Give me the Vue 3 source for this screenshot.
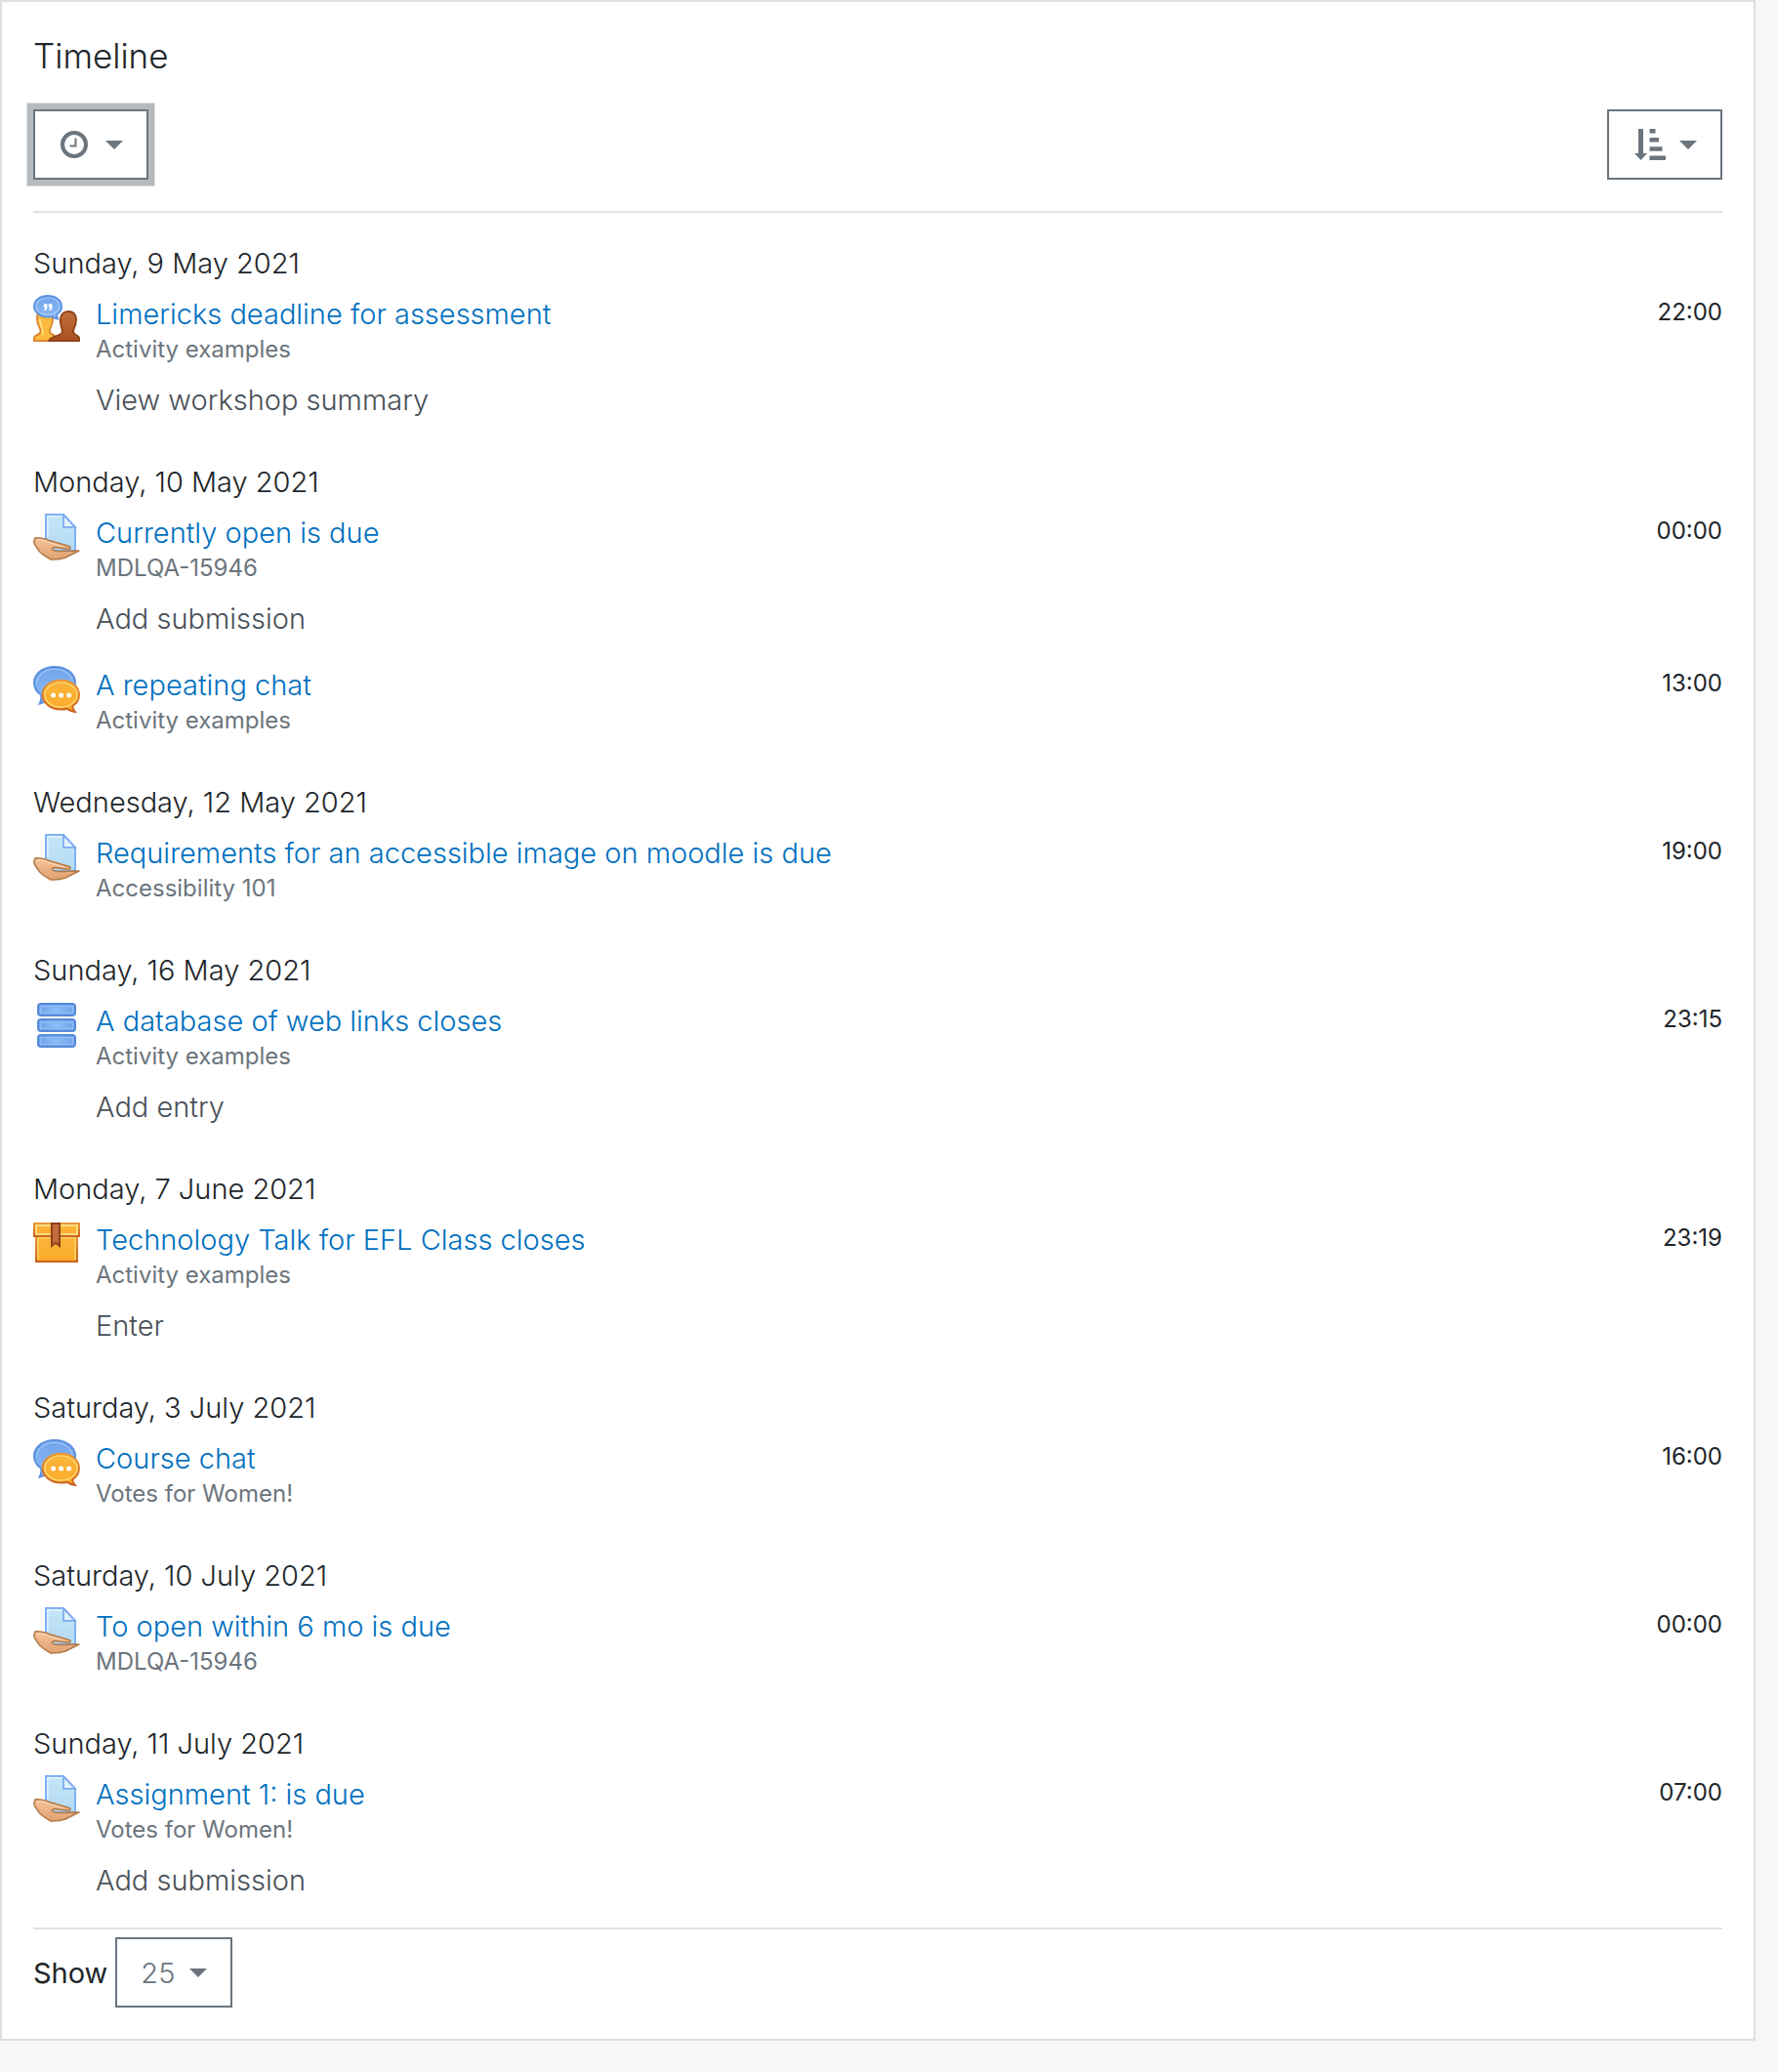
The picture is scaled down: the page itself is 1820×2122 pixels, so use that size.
<script setup>
import { ref } from 'vue'

const limit = ref('25')

const days = [
  {
    date: 'Sunday, 9 May 2021',
    events: [
      { icon: 'workshop', name: 'Limericks deadline for assessment', course: 'Activity examples', time: '22:00', action: 'View workshop summary' },
    ],
  },
  {
    date: 'Monday, 10 May 2021',
    events: [
      { icon: 'assign', name: 'Currently open is due', course: 'MDLQA-15946', time: '00:00', action: 'Add submission' },
      { icon: 'chat', name: 'A repeating chat', course: 'Activity examples', time: '13:00' },
    ],
  },
  {
    date: 'Wednesday, 12 May 2021',
    events: [
      { icon: 'assign', name: 'Requirements for an accessible image on moodle is due', course: 'Accessibility 101', time: '19:00' },
    ],
  },
  {
    date: 'Sunday, 16 May 2021',
    events: [
      { icon: 'data', name: 'A database of web links closes', course: 'Activity examples', time: '23:15', action: 'Add entry' },
    ],
  },
  {
    date: 'Monday, 7 June 2021',
    events: [
      { icon: 'scorm', name: 'Technology Talk for EFL Class closes', course: 'Activity examples', time: '23:19', action: 'Enter' },
    ],
  },
  {
    date: 'Saturday, 3 July 2021',
    events: [
      { icon: 'chat', name: 'Course chat', course: 'Votes for Women!', time: '16:00' },
    ],
  },
  {
    date: 'Saturday, 10 July 2021',
    events: [
      { icon: 'assign', name: 'To open within 6 mo is due', course: 'MDLQA-15946', time: '00:00' },
    ],
  },
  {
    date: 'Sunday, 11 July 2021',
    events: [
      { icon: 'assign', name: 'Assignment 1: is due', course: 'Votes for Women!', time: '07:00', action: 'Add submission' },
    ],
  },
]
</script>

<template>
  <!-- shared gradients for the activity icons -->
  <svg class="defs" width="0" height="0" aria-hidden="true">
    <defs>
      <linearGradient id="g-blue" x1="0" y1="0" x2="0" y2="1">
        <stop offset="0" stop-color="#6fa3ea" />
        <stop offset="1" stop-color="#8fbdf5" />
      </linearGradient>
      <linearGradient id="g-orange" x1="0" y1="0" x2="0" y2="1">
        <stop offset="0" stop-color="#f9b63a" />
        <stop offset="1" stop-color="#fcaa2a" />
      </linearGradient>
      <linearGradient id="g-edge" x1="0" y1="0" x2="0" y2="1">
        <stop offset="0" stop-color="#e8973a" />
        <stop offset="1" stop-color="#cb6220" />
      </linearGradient>
      <linearGradient id="g-brown" x1="0" y1="0" x2="0" y2="1">
        <stop offset="0" stop-color="#c0703c" />
        <stop offset="1" stop-color="#a94f1f" />
      </linearGradient>
      <linearGradient id="g-page" x1="0" y1="0" x2="0" y2="1">
        <stop offset="0" stop-color="#c5e6f8" />
        <stop offset="1" stop-color="#b3daf3" />
      </linearGradient>
      <linearGradient id="g-hand" x1="0" y1="0" x2="0" y2="1">
        <stop offset="0" stop-color="#f7c49a" />
        <stop offset="1" stop-color="#e0a170" />
      </linearGradient>
      <radialGradient id="g-disk">
        <stop offset="0" stop-color="#8fc2fa" />
        <stop offset="1" stop-color="#6b9ee8" />
      </radialGradient>
    </defs>
  </svg>

  <section class="timeline">
    <h1>Timeline</h1>

    <div class="filters">
      <button type="button" class="btn focused" aria-label="Filter timeline by date">
        <svg class="glyph clock" viewBox="0 0 28 28" aria-hidden="true">
          <circle cx="14" cy="14" r="12" fill="none" stroke="currentColor" stroke-width="4" />
          <path d="M15.5 7.5V15.5H9.5" fill="none" stroke="currentColor" stroke-width="2" />
        </svg>
        <svg class="caret" viewBox="0 0 18 9" aria-hidden="true"><path d="M0 0H18L9 9Z" fill="currentColor" /></svg>
      </button>
      <button type="button" class="btn" aria-label="Sort timeline items">
        <svg class="glyph sort" viewBox="0 0 32 34" aria-hidden="true">
          <path d="M4 1H9V26H13L6.500 33L0 26H4Z" fill="currentColor" />
          <path d="M15.500 1H21.500V5.500H15.500ZM15.500 10H25V14.500H15.500ZM15.500 19.300H28.500V23.800H15.500ZM15.500 28.500H32V33H15.500Z" fill="currentColor" />
        </svg>
        <svg class="caret" viewBox="0 0 18 9" aria-hidden="true"><path d="M0 0H18L9 9Z" fill="currentColor" /></svg>
      </button>
    </div>

    <div class="days">
      <div v-for="day in days" :key="day.date" class="day">
        <h2>{{ day.date }}</h2>
        <ul>
          <li v-for="event in day.events" :key="event.name" class="event">
            <svg v-if="event.icon === 'workshop'" class="icon" viewBox="0 0 24 24" aria-hidden="true">
              <path d="M.4 23.600V22C.4 20.600 3.800 20.500 3.800 18.600C3.800 17 2 15.500 2 12.500C2 9 3.500 7 6 7S10 9 10 12.500C10 15.500 8.400 17 8.400 18.600C8.400 20.500 12 20.600 12 22V23.600Z" fill="#fdbb3e" stroke="#d9822f" stroke-width=".9" />
              <path d="M4.500 20.500C6 19 3.500 16 3.400 12.500" fill="none" stroke="#ffdf86" stroke-width=".9" />
              <path d="M8 23.600C8.500 21 14.900 21.300 14.900 18.800C14.900 17.200 13.900 16 13.900 13C13.900 10 15.400 8.500 18 8.500S22 10 22 13C22 16 20.500 17.200 20.500 18.800C20.500 20.800 23.600 20.500 23.600 22.300V23.600Z" fill="url(#g-brown)" stroke="#8c4318" stroke-width=".9" />
              <path d="M7.500 .5C11.400 .5 14.500 2.800 14.500 5.900C14.500 7.900 13.300 9.300 12 10.100C12 11 12.300 11.700 12.600 12.300C11.300 12.200 10.400 11.400 9.900 11C9.100 11.200 8.300 11.300 7.500 11.300C3.600 11.300 .5 9 .5 5.900S3.600 .5 7.500 .5Z" fill="url(#g-blue)" stroke="#5e94e3" />
              <ellipse cx="7.500" cy="5.900" rx="6" ry="4.400" fill="none" stroke="#a2cafa" stroke-width=".6" />
              <path d="M5.400 4.600H7.200V6.400Q7.200 7.900 5.700 8.100V7.300Q6.200 7 6.200 6.400H5.400ZM7.900 4.600H9.700V6.400Q9.700 7.900 8.200 8.100V7.300Q8.700 7 8.700 6.400H7.900Z" fill="#fff" />
            </svg>

            <svg v-else-if="event.icon === 'assign'" class="icon" viewBox="0 0 24 24" aria-hidden="true">
              <path d="M6.500 .5H15.500L21.500 7V19H6.500Z" fill="url(#g-page)" stroke="#80b1f4" />
              <path d="M7.400 12V1.400H14.700" fill="none" stroke="#e3f4fd" stroke-width=".7" />
              <path d="M15.500 .7V6.900H21.500Z" fill="#e3f3fd" stroke="#7eaaf0" stroke-width=".9" />
              <path d="M1.100 12.400C4 12.400 6 12.600 8.200 13.800L18 16.600C19.700 17.100 19.200 18.300 17.500 18.100L11.500 17.300C9.400 17.200 9 18.500 11 19C15 19.800 19.500 18.800 23.500 19L16.500 22.500C14 23.500 11.500 23.600 9 23.500C6 21.700 4 20.700 2.800 18.800C1.800 17.200 .5 16 .4 14.400Z" fill="url(#g-hand)" stroke="#b37a48" stroke-width=".8" stroke-linejoin="round" />
              <path d="M1.800 13.400C4.500 13.200 6 13.700 8 14.800L15.500 16.900" fill="none" stroke="#fbd9b9" stroke-width=".5" />
            </svg>

            <svg v-else-if="event.icon === 'chat'" class="icon" viewBox="0 0 24 24" aria-hidden="true">
              <path d="M11 .5C17 .5 21.500 4 21.500 8.600S17 16.700 11 16.700C9.800 16.700 8.600 16.600 7.600 16.300C6.500 17.800 5 18.900 3.400 19.300C4.200 17.900 4.300 16.400 4.200 14.900C1.900 13.400 .5 11.200 .5 8.600C.5 4 5 .5 11 .5Z" fill="url(#g-blue)" stroke="#5c91e0" />
              <path d="M2 8.600C2 4.800 5.800 1.700 11 1.700S20 4.800 20 8.600" fill="none" stroke="#9dc5f8" stroke-width=".6" />
              <path d="M14.200 7.400C19.400 7.400 23.500 10.600 23.500 14.800C23.500 17.200 22.200 19.300 20.100 20.600C20.200 21.700 20.600 22.700 21.400 23.500C19.600 23.300 18.200 22.500 17.300 21.900C16.300 22.200 15.300 22.300 14.200 22.300C9 22.300 4.800 19 4.800 14.800S9 7.400 14.200 7.400Z" fill="url(#g-orange)" stroke="url(#g-edge)" />
              <ellipse cx="14.200" cy="14.800" rx="8.300" ry="6.300" fill="none" stroke="#ffdc7c" stroke-width=".6" />
              <circle cx="10.300" cy="15" r="1.250" fill="#fff" />
              <circle cx="14.300" cy="15" r="1.250" fill="#fff" />
              <circle cx="18.300" cy="15" r="1.250" fill="#fff" />
            </svg>

            <svg v-else-if="event.icon === 'data'" class="icon" viewBox="0 0 24 24" aria-hidden="true">
              <g v-for="y in [1, 9, 17]" :key="y">
                <rect x="2.500" :y="y" width="19" height="6" rx="1.500" fill="url(#g-disk)" stroke="#588bd9" />
                <rect x="3.800" :y="y + 1.300" width="16.400" height="3.400" fill="none" stroke="#8fbcf6" stroke-width=".8" />
              </g>
            </svg>

            <svg v-else class="icon" viewBox="0 0 24 24" aria-hidden="true">
              <rect x="1.500" y="7.500" width="21" height="13.500" fill="url(#g-orange)" stroke="url(#g-edge)" />
              <path d="M2.500 20V8.700H21.500V20" fill="none" stroke="#ffd25f" stroke-width=".8" />
              <rect x=".5" y="1.500" width="23" height="6.500" fill="url(#g-orange)" stroke="url(#g-edge)" />
              <rect x="1.500" y="2.500" width="21" height="4.500" fill="none" stroke="#ffe08a" stroke-width=".9" />
              <path d="M9.500 1.500H13.500V13L11.500 11.400L9.500 13Z" fill="#c26c3c" stroke="#8f4216" />
            </svg>

            <div class="details">
              <a href="#" class="name">{{ event.name }}</a>
              <small class="course">{{ event.course }}</small>
              <a v-if="event.action" href="#" class="action">{{ event.action }}</a>
            </div>
            <time class="time">{{ event.time }}</time>
          </li>
        </ul>
      </div>
    </div>

    <div class="paging">
      <label for="limit">Show</label>
      <div class="select">
        <select id="limit" v-model="limit">
          <option>5</option>
          <option>10</option>
          <option>25</option>
        </select>
        <svg class="caret" viewBox="0 0 18 9" aria-hidden="true"><path d="M0 0H18L9 9Z" fill="currentColor" /></svg>
      </div>
    </div>
  </section>
</template>

<style>
body {
  background: #f7f7f7;
}
</style>

<style scoped>
.defs {
  position: absolute;
}

.timeline {
  margin-right: 22px;
  padding: 32px;
  border: 2px solid #dee0e0;
  background: #fff;
  color: #212529;
  font-family: Inter, "Noto Sans", sans-serif;
  font-size: 29px;
  font-weight: 300;
}

h1 {
  margin: 0 0 32px;
  font-size: 35px;
  font-weight: 300;
  line-height: 46px;
}

.filters {
  display: flex;
  justify-content: space-between;
  padding-bottom: 32px;
  border-bottom: 2px solid #dee2e6;
}

.btn {
  display: flex;
  align-items: center;
  justify-content: space-between;
  width: 118px;
  height: 72px;
  padding: 0 24px 0 26px;
  border: 2px solid #6c757d;
  background: #fff;
  color: #6c757d;
}

.focused {
  outline: 1px solid #dcdfe1;
  outline-offset: 6px;
  box-shadow: 0 0 0 6px #b5babe;
}

.clock {
  width: 28px;
  height: 28px;
}

.sort {
  width: 32px;
  height: 34px;
}

.caret {
  width: 18px;
  height: 9px;
}

.days {
  padding: 6px 0 10px;
  border-bottom: 2px solid #dee2e6;
}

h2 {
  margin: 0;
  padding-top: 24px;
  font-size: 29px;
  font-weight: 300;
  line-height: 44px;
}

ul {
  margin: 0;
  padding: 0;
  list-style: none;
}

.event {
  display: flex;
  padding: 10px 0 20px;
}

.icon {
  flex: none;
  width: 48px;
  height: 48px;
  margin-right: 16px;
}

.details {
  display: flex;
  flex: 1;
  flex-direction: column;
  align-items: flex-start;
  padding-top: 2px;
}

.name,
.action {
  line-height: 36px;
  text-decoration: none;
}

.name {
  color: #0070bf;
}

.course {
  color: #6c757d;
  font-size: 24px;
  font-weight: 400;
  line-height: 36px;
}

.action {
  margin-top: 16px;
  color: #495057;
}

.time {
  font-size: 24px;
  font-weight: 400;
  line-height: 36px;
}

.paging {
  display: flex;
  align-items: center;
  gap: 8px;
  padding-top: 8px;
  font-weight: 400;
}

.select {
  position: relative;
}

select {
  width: 120px;
  height: 72px;
  padding: 0 24px;
  border: 2px solid #6c757d;
  border-radius: 0;
  background: #fff;
  color: #6c757d;
  font: inherit;
  font-weight: 300;
  appearance: none;
}

.select .caret {
  position: absolute;
  top: 32px;
  right: 26px;
  color: #6c757d;
  pointer-events: none;
}
</style>
